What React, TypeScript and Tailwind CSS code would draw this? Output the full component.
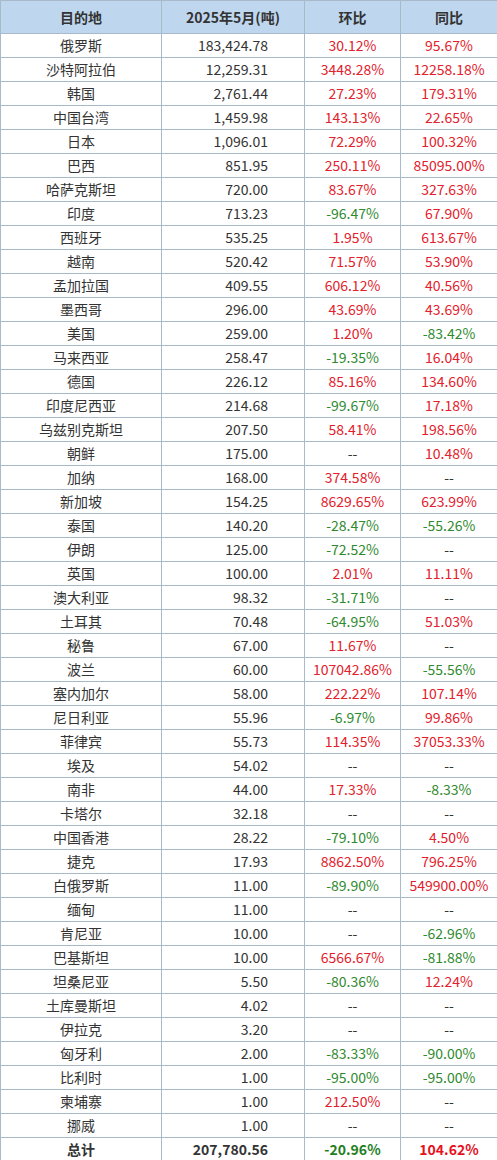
const rows: [string, string, string, string][] = [
  ['俄罗斯', '183,424.78', '30.12%', '95.67%'],
  ['沙特阿拉伯', '12,259.31', '3448.28%', '12258.18%'],
  ['韩国', '2,761.44', '27.23%', '179.31%'],
  ['中国台湾', '1,459.98', '143.13%', '22.65%'],
  ['日本', '1,096.01', '72.29%', '100.32%'],
  ['巴西', '851.95', '250.11%', '85095.00%'],
  ['哈萨克斯坦', '720.00', '83.67%', '327.63%'],
  ['印度', '713.23', '-96.47%', '67.90%'],
  ['西班牙', '535.25', '1.95%', '613.67%'],
  ['越南', '520.42', '71.57%', '53.90%'],
  ['孟加拉国', '409.55', '606.12%', '40.56%'],
  ['墨西哥', '296.00', '43.69%', '43.69%'],
  ['美国', '259.00', '1.20%', '-83.42%'],
  ['马来西亚', '258.47', '-19.35%', '16.04%'],
  ['德国', '226.12', '85.16%', '134.60%'],
  ['印度尼西亚', '214.68', '-99.67%', '17.18%'],
  ['乌兹别克斯坦', '207.50', '58.41%', '198.56%'],
  ['朝鲜', '175.00', '--', '10.48%'],
  ['加纳', '168.00', '374.58%', '--'],
  ['新加坡', '154.25', '8629.65%', '623.99%'],
  ['泰国', '140.20', '-28.47%', '-55.26%'],
  ['伊朗', '125.00', '-72.52%', '--'],
  ['英国', '100.00', '2.01%', '11.11%'],
  ['澳大利亚', '98.32', '-31.71%', '--'],
  ['土耳其', '70.48', '-64.95%', '51.03%'],
  ['秘鲁', '67.00', '11.67%', '--'],
  ['波兰', '60.00', '107042.86%', '-55.56%'],
  ['塞内加尔', '58.00', '222.22%', '107.14%'],
  ['尼日利亚', '55.96', '-6.97%', '99.86%'],
  ['菲律宾', '55.73', '114.35%', '37053.33%'],
  ['埃及', '54.02', '--', '--'],
  ['南非', '44.00', '17.33%', '-8.33%'],
  ['卡塔尔', '32.18', '--', '--'],
  ['中国香港', '28.22', '-79.10%', '4.50%'],
  ['捷克', '17.93', '8862.50%', '796.25%'],
  ['白俄罗斯', '11.00', '-89.90%', '549900.00%'],
  ['缅甸', '11.00', '--', '--'],
  ['肯尼亚', '10.00', '--', '-62.96%'],
  ['巴基斯坦', '10.00', '6566.67%', '-81.88%'],
  ['坦桑尼亚', '5.50', '-80.36%', '12.24%'],
  ['土库曼斯坦', '4.02', '--', '--'],
  ['伊拉克', '3.20', '--', '--'],
  ['匈牙利', '2.00', '-83.33%', '-90.00%'],
  ['比利时', '1.00', '-95.00%', '-95.00%'],
  ['柬埔寨', '1.00', '212.50%', '--'],
  ['挪威', '1.00', '--', '--'],
];

function tone(v: string) {
  if (v === '--') return 'text-[#333333]';
  return v.startsWith('-') ? 'text-[#2f8a2f]' : 'text-[#e3202b]';
}

export default function App() {
  const cell = 'border border-[#a9b9c9] h-[24px] p-0 leading-[23px]';
  return (
    <div className="w-[497px] bg-white" style={{ fontFamily: '"Noto Sans CJK SC", "Liberation Sans", sans-serif' }}>
      <table className="w-[497px] border-collapse table-fixed text-[14px] text-[#333333]">
        <colgroup>
          <col className="w-[161px]" />
          <col className="w-[143px]" />
          <col className="w-[96px]" />
          <col className="w-[97px]" />
        </colgroup>
        <thead>
          <tr className="bg-[#bed7ee] font-bold">
            <th className="border border-[#a9b9c9] h-[33px] p-0 text-center">目的地</th>
            <th className="border border-[#a9b9c9] h-[33px] p-0 text-center">2025年5月(吨)</th>
            <th className="border border-[#a9b9c9] h-[33px] p-0 text-center">环比</th>
            <th className="border border-[#a9b9c9] h-[33px] p-0 text-center">同比</th>
          </tr>
        </thead>
        <tbody>
          {rows.map((r) => (
            <tr key={r[0]}>
              <td className={`${cell} text-center`}>{r[0]}</td>
              <td className={`${cell} text-right pr-[36px]`}>{r[1]}</td>
              <td className={`${cell} text-center ${tone(r[2])}`}>{r[2]}</td>
              <td className={`${cell} text-center ${tone(r[3])}`}>{r[3]}</td>
            </tr>
          ))}
          <tr className="font-bold">
            <td className={`${cell} text-center`}>总计</td>
            <td className={`${cell} text-right pr-[36px]`}>207,780.56</td>
            <td className={`${cell} text-center text-[#1f7f1f]`}>-20.96%</td>
            <td className={`${cell} text-center text-[#e8101c]`}>104.62%</td>
          </tr>
        </tbody>
      </table>
    </div>
  );
}
